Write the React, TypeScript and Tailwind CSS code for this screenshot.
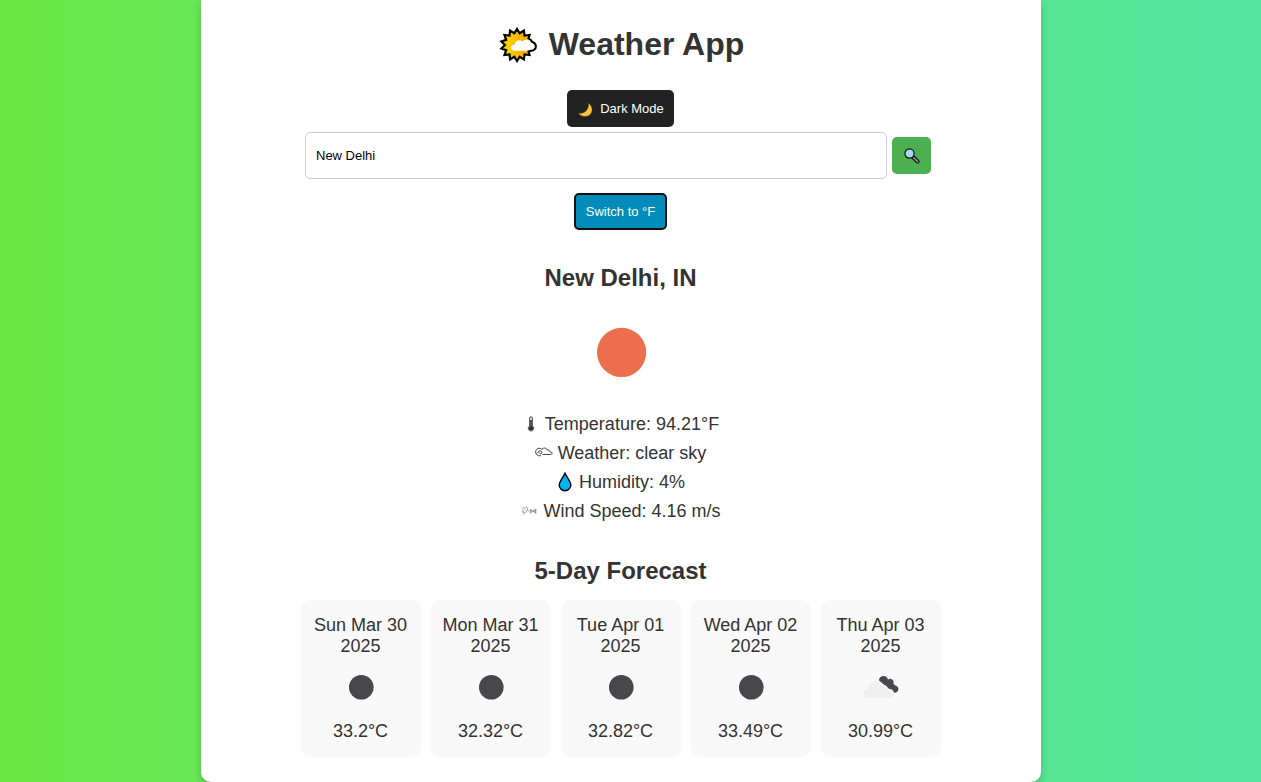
import { useState, type ReactNode } from "react";

// Rays run clockwise from the lower right round to the upper right; the cloud closes the gap.
const SUN_RAYS = Array.from({ length: 23 }, (_, i) => {
  const step = i + 10;
  const r = step % 2 === 0 ? 16 : 12;
  const a = (Math.PI * step) / 14;
  return `${(20 + r * Math.sin(a)).toFixed(2)} ${(18 - r * Math.cos(a)).toFixed(2)}`;
}).join("L");

function SunCloudIcon() {
  return (
    <svg viewBox="0 0 44 36" className="h-9 w-11" aria-hidden="true">
      <defs>
        <linearGradient id="sun" x1="0" y1="0" x2="1" y2="0">
          <stop offset="0" stopColor="#ffe000" />
          <stop offset="0.500" stopColor="#ffb400" />
        </linearGradient>
      </defs>
      <path
        d={`M${SUN_RAYS}L31.500 11.500C33.500 12 34.500 13.300 35 14.800c2.500.8 3.800 2.800 3.800 4.700 0 2.500-2.300 4.300-5.300 4.300l-2 .5z`}
        fill="url(#sun)"
        stroke="#000"
        strokeWidth="2.200"
        strokeLinejoin="miter"
      />
      <path
        d="M18 23.800c-5.500 0-5.500-6-.5-6 .3-4.500 5-6 8-3.300 1-1.500 3.500-2.500 5.800-1.800 1.700.5 2.500 1.700 2.900 3 2.200.8 3.500 2.300 3.500 3.800 0 2-2 3.200-4.200 3.200l-3.500 1.100z"
        fill="#fff"
      />
    </svg>
  );
}

function MoonIcon() {
  return (
    <svg viewBox="0 0 18 16" className="h-4 w-[18px]" aria-hidden="true">
      <path d="M11.500 1.200c5.500 3.500 5 12.500-3 13.300-3 .2-5.500-1-7-3.300C7.500 12 12 7.700 11.500 1.200z" fill="#fcc33c" stroke="#4a3510" strokeWidth=".5" />
    </svg>
  );
}

function SearchIcon() {
  return (
    <svg viewBox="0 0 16 16" className="size-4" aria-hidden="true">
      <path d="M9.500 9.500l4 4" stroke="#111" strokeWidth="4" strokeLinecap="round" />
      <path d="M9.800 9.800l3.700 3.700" stroke="#888" strokeWidth="1.900" strokeLinecap="round" />
      <circle cx="5.500" cy="5.500" r="4.600" fill="#a9d4f5" stroke="#111" strokeWidth="1.200" />
    </svg>
  );
}

function ThermometerIcon() {
  return (
    <svg viewBox="0 0 18 18" className="size-[18px]" aria-hidden="true">
      <path d="M7.500 11V3.200a1.500 1.500 0 0 1 3 0V11a2.700 2.700 0 1 1-3 0z" fill="#ccc" stroke="#555" strokeWidth=".9" />
      <path d="M9 5v8" stroke="#444" strokeWidth="1.800" />
      <circle cx="9" cy="13.300" r="2.300" fill="#333" />
    </svg>
  );
}

function CloudIcon() {
  return (
    <svg viewBox="0 0 18 12" className="h-3 w-[18px]" aria-hidden="true" fill="none" stroke="#444">
      <path d="M6.500 1.800C3 .3.500 2.300.7 5c.2 3 2.800 4.500 5.300 3.500" />
      <path d="M2.800 6.500C2.500 3.500 6.500 3 6.800 5.300 7 7 4.800 7.300 4.600 5.800" />
      <path d="M6.500 3C7.500.5 11.500.3 12 3c2-.4 3 .6 3 1.800 2.800.2 2.700 2.700.5 2.700H7.500" />
    </svg>
  );
}

function DropIcon() {
  return (
    <svg viewBox="0 0 18 20" className="h-5 w-[18px]" aria-hidden="true">
      <path d="M9 1.200C7.500 5 3.200 9.500 3.200 13a5.800 5.800 0 0 0 11.600 0C14.800 9.500 10.500 5 9 1.200z" fill="#00b4f0" stroke="#000" strokeWidth="1.400" />
    </svg>
  );
}

function WindIcon() {
  return (
    <svg viewBox="0 0 18 10" className="h-2.5 w-[18px]" aria-hidden="true" fill="none" stroke="#888" strokeWidth=".6">
      <path d="M1.500 1.500l2 1 .5-1.500M2 3.500c1 2 3 1 3-1s2.500-2 2.500 0-1.500 4-3.500 4.500M3 5l1 4M6 1l2 2-2.500 4M1.500 5.500l3 1M8 5h3" />
      <path d="M10.500 3l2 2-2 2.500zM12.500 5l3.500-2v4.500zM13.500 4v2" fill="#aaa" />
    </svg>
  );
}

function BrokenCloudsIcon() {
  return (
    <svg viewBox="0 0 50 50" className="size-[50px]" aria-hidden="true">
      <path d="M23 18.500a4.500 4 0 0 1 9-.8 3.500 3.500 0 0 1 5.300 4.300 2.800 2.800 0 0 1 2 1.500 3.600 3.600 0 1 1-3.500 5.500L26 21z" fill="#48484a" />
      <path d="M12.500 36a4.600 4.600 0 0 1-.5-9.400 5.800 5.800 0 0 1 4-5.600c1-2.500 5-3.500 7.500-.5 1.500 1 2 2 2.300 3 3-1.500 6 .5 6 3.500h1.500a4.500 4.500 0 0 1 .7 9z" fill="#f0f0f0" />
    </svg>
  );
}

function ClearIcon({ large = false }: { large?: boolean }) {
  return (
    <svg viewBox="0 0 50 50" className={large ? "size-[100px]" : "size-[50px]"} aria-hidden="true">
      <circle cx="25.300" cy="25.200" r="12.300" fill={large ? "#ec6e4c" : "#48484a"} />
    </svg>
  );
}

function Reading({ icon, children }: { icon: ReactNode; children: ReactNode }) {
  return (
    <p className="flex h-[29px] items-center justify-center gap-[5px]">
      {icon}
      <span>{children}</span>
    </p>
  );
}

const FORECAST = [
  { date: "Sun Mar 30 2025", temp: "33.2°C", clear: true },
  { date: "Mon Mar 31 2025", temp: "32.32°C", clear: true },
  { date: "Tue Apr 01 2025", temp: "32.82°C", clear: true },
  { date: "Wed Apr 02 2025", temp: "33.49°C", clear: true },
  { date: "Thu Apr 03 2025", temp: "30.99°C", clear: false },
];

export default function App() {
  const [city, setCity] = useState("New Delhi");
  return (
    <div className="min-h-screen bg-linear-to-r from-[#6ce842] to-[#54e6a0] pr-5 font-['Liberation_Sans',Arial,sans-serif] text-lg text-[#333]">
      <main className="mx-auto flex max-w-[840px] flex-col items-center rounded-b-[10px] bg-white px-5 pt-5 pb-[25px] text-center shadow-[0_4px_10px_rgba(0,0,0,0.2)]">
        <h1 className="flex h-[49px] items-center gap-2 text-[32px] font-bold">
          <SunCloudIcon />
          Weather App
        </h1>
        <button type="button" className="mt-[21px] flex h-[37px] items-center gap-[5px] rounded-[5px] bg-[#222] px-2.5 pt-0.5 text-[13px] text-white">
          <MoonIcon />
          Dark Mode
        </button>
        <form className="mt-[5px] flex w-full max-w-[631px] items-center gap-[5px] pr-[5px]" onSubmit={(e) => e.preventDefault()}>
          <input
            aria-label="City"
            value={city}
            onChange={(e) => setCity(e.target.value)}
            className="h-[47px] min-w-0 flex-1 rounded-[5px] border border-[#ccc] px-2.5 text-[13px] text-black"
          />
          <button type="submit" aria-label="Search" className="flex h-[37px] w-[39px] items-center justify-center rounded-[5px] bg-[#4caf50]">
            <SearchIcon />
          </button>
        </form>
        <button type="button" className="mt-3.5 h-[37px] rounded-[5px] border-2 border-[#101010] bg-[#008cba] px-2.5 pt-0.5 text-[13px] text-white">
          Switch to °F
        </button>
        <h2 className="mt-8 text-2xl font-bold">New Delhi, IN</h2>
        <div className="mt-2">
          <ClearIcon large />
        </div>
        <div className="mt-[7px]">
          <Reading icon={<ThermometerIcon />}>Temperature: 94.21°F</Reading>
          <Reading icon={<CloudIcon />}>Weather: clear sky</Reading>
          <Reading icon={<DropIcon />}>Humidity: 4%</Reading>
          <Reading icon={<WindIcon />}>Wind Speed: 4.16 m/s</Reading>
        </div>
        <h2 className="mt-[30px] text-2xl font-bold">5-Day Forecast</h2>
        <ul className="mt-[13px] flex flex-wrap justify-center gap-2.5">
          {FORECAST.map((day) => (
            <li key={day.date} className="flex w-[120px] flex-col items-center rounded-[10px] bg-[#f9f9f9] px-2.5 py-[15px]">
              <p className="leading-[21px]">{day.date}</p>
              <div className="mt-[5px]">{day.clear ? <ClearIcon /> : <BrokenCloudsIcon />}</div>
              <p className="mt-[9px] leading-[21px]">{day.temp}</p>
            </li>
          ))}
        </ul>
      </main>
    </div>
  );
}
